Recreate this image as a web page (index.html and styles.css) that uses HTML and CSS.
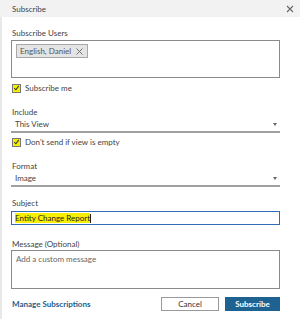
FILE: index.html
```html
<!DOCTYPE html>
<html>
<head>
<meta charset="utf-8">
<link rel="stylesheet" href="styles.css">
</head>
<body>
<div class="dialog">
  <div class="header">
    <span class="title">Subscribe</span>
    <svg class="close" width="8" height="8" viewBox="0 0 8 8"><path d="M1 1L7 7M7 1L1 7" stroke="#666" stroke-width="1.1"/></svg>
  </div>
  <div class="body">
    <div class="label first">Subscribe Users</div>
    <div class="users">
      <span class="tag">English, Daniel <svg width="7" height="7" viewBox="0 0 7 7"><path d="M0.5 0.5L6.5 6.5M6.5 0.5L0.5 6.5" stroke="#666" stroke-width="0.9"/></svg></span>
    </div>
    <div class="check row1"><span class="box"><svg width="8" height="8" viewBox="0 0 8 8"><path d="M1.5 4.2L3.3 6L6.6 1.6" fill="none" stroke="#333" stroke-width="1.2"/></svg></span>Subscribe me</div>
    <div class="label sect">Include</div>
    <div class="select">This View<span class="arrow"></span></div>
    <div class="check row2"><span class="box"><svg width="8" height="8" viewBox="0 0 8 8"><path d="M1.5 4.2L3.3 6L6.6 1.6" fill="none" stroke="#333" stroke-width="1.2"/></svg></span>Don't send if view is empty</div>
    <div class="label sect">Format</div>
    <div class="select">Image<span class="arrow"></span></div>
    <div class="label subj">Subject</div>
    <div class="input"><span class="hl">Entity Change Report</span><span class="caret"></span></div>
    <div class="label sect">Message (Optional)</div>
    <div class="textarea">Add a custom message</div>
    <div class="footer">
      <a class="link">Manage Subscriptions</a>
      <div class="buttons">
        <button class="btn cancel">Cancel</button>
        <button class="btn primary">Subscribe</button>
      </div>
    </div>
  </div>
</div>
</body>
</html>
```

FILE: styles.css
```css
html, body {
  margin: 0;
  padding: 0;
  background: #fff;
}
body {
  font-family: Lato, "Open Sans", sans-serif;
  font-size: 8px;
  color: #444;
  width: 300px;
  height: 319px;
  overflow: hidden;
}
.dialog {
  width: 300px;
  height: 319px;
  box-sizing: border-box;
  border-left: 2px solid #e8e8e8;
}
.header {
  height: 17px;
  background: #f2f2f2;
  display: flex;
  align-items: center;
  justify-content: space-between;
  padding: 0 6px 0 12px;
  margin-left: -2px;
}
.title {
  color: #444;
  font-size: 8px;
}
.close { display: block; }
.body {
  padding: 0 20px 0 9px;
}
.label {
  height: 10px;
  line-height: 10px;
  padding-left: 1px;
  color: #444;
}
.label.first { margin-top: 11px; }
.label.sect { margin-top: 14px; }
.label.subj { margin-top: 11px; }
.users {
  margin-top: 2px;
  height: 38px;
  box-sizing: border-box;
  border: 1px solid #8a8a8a;
  padding: 3px 4px;
}
.tag {
  display: inline-flex;
  align-items: center;
  gap: 5px;
  height: 14px;
  box-sizing: border-box;
  padding: 0 4px 0 3px;
  background: #e4e4e4;
  border: 1px solid #a8a8a8;
  color: #555;
}
.tag svg { display: block; }
.check {
  display: flex;
  align-items: center;
  height: 10px;
  line-height: 10px;
  padding-left: 1px;
}
.check.row1 { margin-top: 5px; }
.check.row2 { margin-top: 4px; }
.box {
  width: 9px;
  height: 9px;
  box-sizing: border-box;
  background: #f6f000;
  border: 1px solid #777;
  margin-right: 4px;
  display: flex;
  align-items: center;
  justify-content: center;
}
.box svg { display: block; }
.select {
  position: relative;
  height: 16px;
  line-height: 14px;
  box-sizing: border-box;
  padding-left: 4px;
  border-bottom: 2px solid #a0a0a0;
  color: #444;
}
.arrow {
  position: absolute;
  right: 3px;
  top: 6px;
  width: 0;
  height: 0;
  border-left: 2.5px solid transparent;
  border-right: 2.5px solid transparent;
  border-top: 3px solid #666;
}
.input {
  margin-top: 3px;
  height: 14px;
  box-sizing: border-box;
  border: 1px solid #2f6db5;
  display: flex;
  align-items: center;
  padding-left: 3px;
}
.hl {
  background: #f6f000;
  color: #222;
  line-height: 10px;
}
.caret {
  width: 1px;
  height: 9px;
  background: #222;
}
.textarea {
  margin-top: 1px;
  height: 39px;
  box-sizing: border-box;
  border: 1px solid #8a8a8a;
  padding: 3px 4px;
  color: #666;
  line-height: 10px;
}
.footer {
  margin-top: 8px;
  display: flex;
  align-items: center;
  justify-content: space-between;
  height: 14px;
}
.link {
  color: #1e5d8a;
  font-weight: bold;
  padding-left: 1px;
}
.buttons {
  display: flex;
  gap: 6px;
}
.btn {
  font-family: Lato, "Open Sans", sans-serif;
  font-size: 8px;
  height: 14px;
  box-sizing: border-box;
  padding: 0;
  margin: 0;
  display: flex;
  align-items: center;
  justify-content: center;
}
.cancel {
  width: 58px;
  background: #fff;
  border: 1px solid #999;
  color: #333;
}
.primary {
  width: 55px;
  background: #1d6290;
  border: 1px solid #1d6290;
  color: #fff;
  font-weight: bold;
}
```
